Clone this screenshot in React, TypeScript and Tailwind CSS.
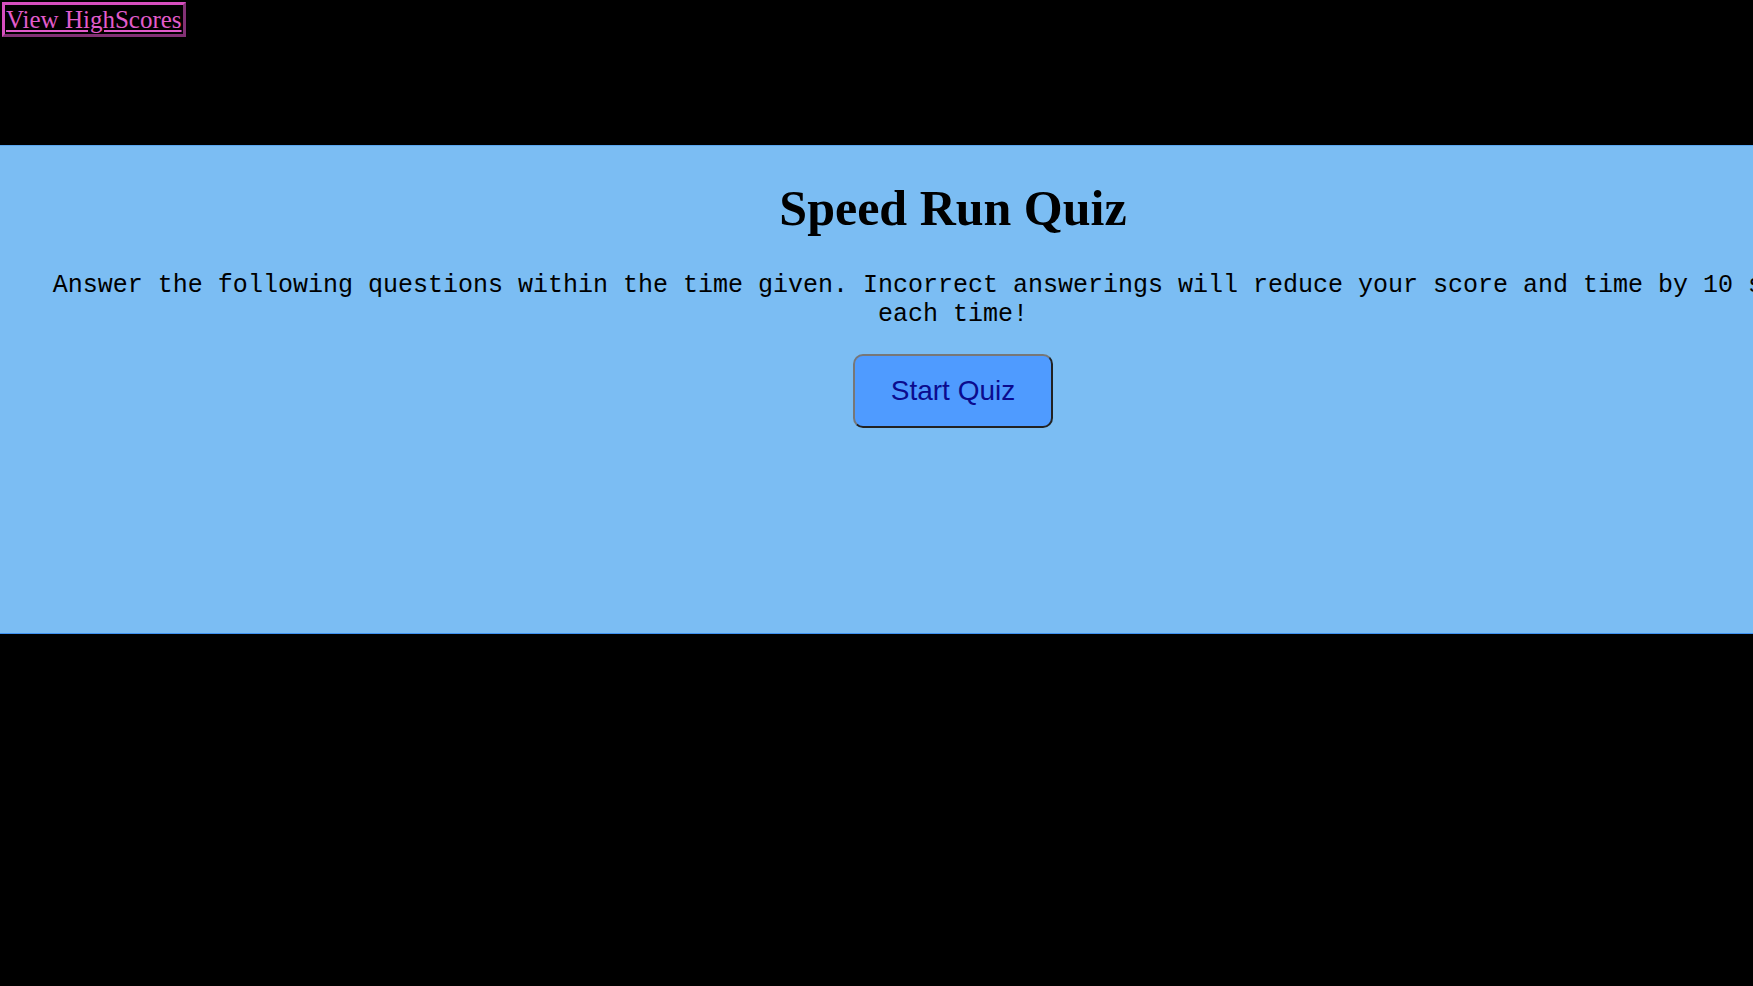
import React from "react";

export default function App() {
  return (
    <div className="min-h-[986px] w-full overflow-hidden bg-black">
      <header className="h-[145px] pt-[2px] pl-[2px]">
        <a
          href="#"
          className="inline-block border-[3px] border-[#d64fbf] px-[1px] text-[25px] leading-[29px] text-[#e25ccb] underline [border-style:outset] [font-family:'Liberation_Serif',serif]"
        >
          View HighScores
        </a>
      </header>
      <section className="h-[489px] border-y border-t-[#5aa6ee] border-b-[#3f92f2] bg-[#7bbdf3]">
        <div className="flex w-[1906px] flex-col items-center pt-[34px]">
          <h1 className="text-[50px] font-bold leading-[57px] text-black [font-family:'Liberation_Serif',serif]">
            Speed Run Quiz
          </h1>
          <p className="mt-[34px] w-[1820px] text-center text-[25px] leading-[29px] text-black [font-family:'Liberation_Mono',monospace]">
            Answer the following questions within the time given. Incorrect answerings will reduce your score and time by 10 seconds each time!
          </p>
          <button
            type="button"
            className="mt-[25px] rounded-[10px] border-2 border-t-[#777777] border-l-[#777777] border-r-[#222222] border-b-[#222222] bg-[#4f9bff] px-[36px] py-[19px] text-[28px] leading-[32px] text-[#0b0b8e] [font-family:'Liberation_Sans',sans-serif]"
          >
            Start Quiz
          </button>
        </div>
      </section>
    </div>
  );
}
